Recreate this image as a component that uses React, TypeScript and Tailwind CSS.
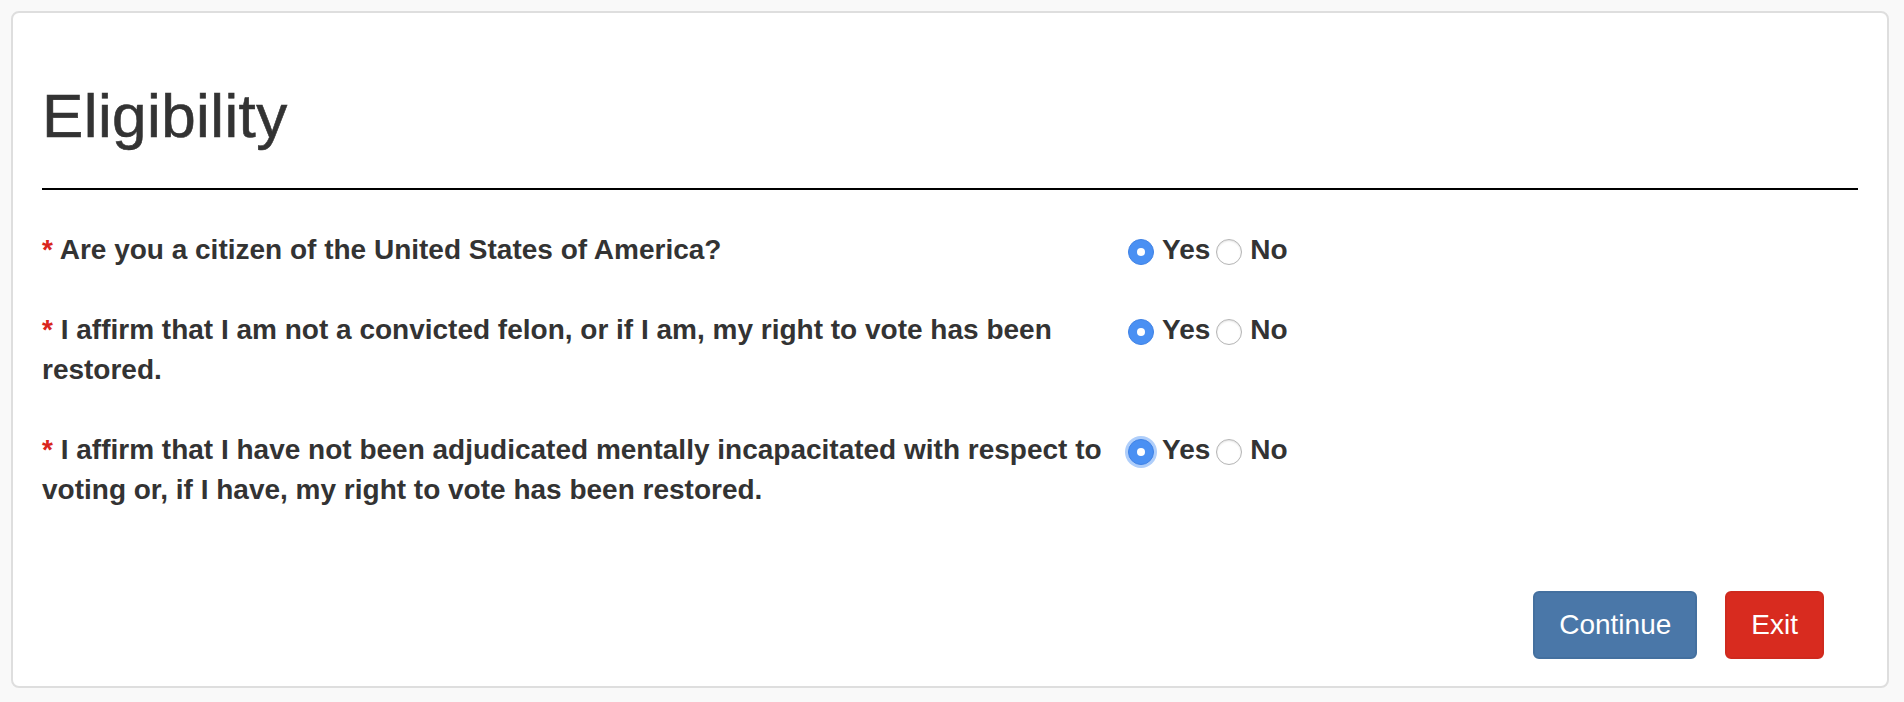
import React, { useState } from "react";

type Question = {
  id: string;
  text: string;
};

const questions: Question[] = [
  { id: "citizen", text: "Are you a citizen of the United States of America?" },
  {
    id: "felon",
    text: "I affirm that I am not a convicted felon, or if I am, my right to vote has been restored.",
  },
  {
    id: "mental",
    text: "I affirm that I have not been adjudicated mentally incapacitated with respect to voting or, if I have, my right to vote has been restored.",
  },
];

function RadioDot({ checked, focused }: { checked: boolean; focused?: boolean }) {
  if (checked) {
    return (
      <span
        className={
          "mt-1 flex h-[26px] w-[26px] shrink-0 items-center justify-center rounded-full bg-[#4a90f3] border border-[#3f82e6] " +
          (focused ? "shadow-[0_0_0_3px_rgba(110,165,245,0.55)]" : "")
        }
      >
        <span className="h-[8px] w-[8px] rounded-full bg-white" />
      </span>
    );
  }
  return (
    <span className="mt-1 h-[26px] w-[26px] shrink-0 rounded-full border border-[#b4b4b4] bg-white shadow-[inset_0_1px_2px_rgba(0,0,0,0.12)]" />
  );
}

function YesNo({
  value,
  onChange,
  focused,
}: {
  value: string;
  onChange: (v: string) => void;
  focused?: boolean;
}) {
  return (
    <div className="flex h-[40px] items-center">
      <button className="flex items-center" onClick={() => onChange("yes")}>
        <RadioDot checked={value === "yes"} focused={focused} />
        <span className="ml-[8px] font-bold">Yes</span>
      </button>
      <button className="ml-[6px] flex items-center" onClick={() => onChange("no")}>
        <RadioDot checked={value === "no"} />
        <span className="ml-[8px] font-bold">No</span>
      </button>
    </div>
  );
}

export default function App() {
  const [answers, setAnswers] = useState<Record<string, string>>({
    citizen: "yes",
    felon: "yes",
    mental: "yes",
  });

  return (
    <div className="min-h-screen bg-[#f9f9f9] pt-[11px] pl-[11px] pr-[15px] pb-[14px] font-['Liberation_Sans',Arial,sans-serif] text-[#333]">
      <div className="h-[677px] rounded-lg border-2 border-[#dedede] bg-white px-[29px]">
        <h2 className="pt-[70px] text-[62px] leading-[66px] font-normal tracking-[0.4px] [-webkit-text-stroke:0.6px_#333]">
          Eligibility
        </h2>
        <hr className="mt-[39px] border-t-2 border-black" />

        <div className="mt-[40px] flex flex-col gap-[40px] text-[28px] leading-[40px]">
          {questions.map((q, i) => (
            <div key={q.id} className="flex">
              <p className="w-[1072px] font-bold">
                <span className="text-[#d9261c]">*</span> {q.text}
              </p>
              <div className="ml-[14px]">
                <YesNo
                  value={answers[q.id]}
                  focused={i === questions.length - 1}
                  onChange={(v) => setAnswers((prev) => ({ ...prev, [q.id]: v }))}
                />
              </div>
            </div>
          ))}
        </div>

        <div className="mt-[81px] flex justify-end gap-[28px] pr-[34px]">
          <button className="h-[68px] rounded-md border-2 border-[#44709f] bg-[#4a77a8] px-[24px] text-[28px] leading-[40px] text-white">
            Continue
          </button>
          <button className="h-[68px] rounded-md border-2 border-[#cf2a1e] bg-[#d82b1f] px-[24px] text-[28px] leading-[40px] text-white">
            Exit
          </button>
        </div>
      </div>
    </div>
  );
}
